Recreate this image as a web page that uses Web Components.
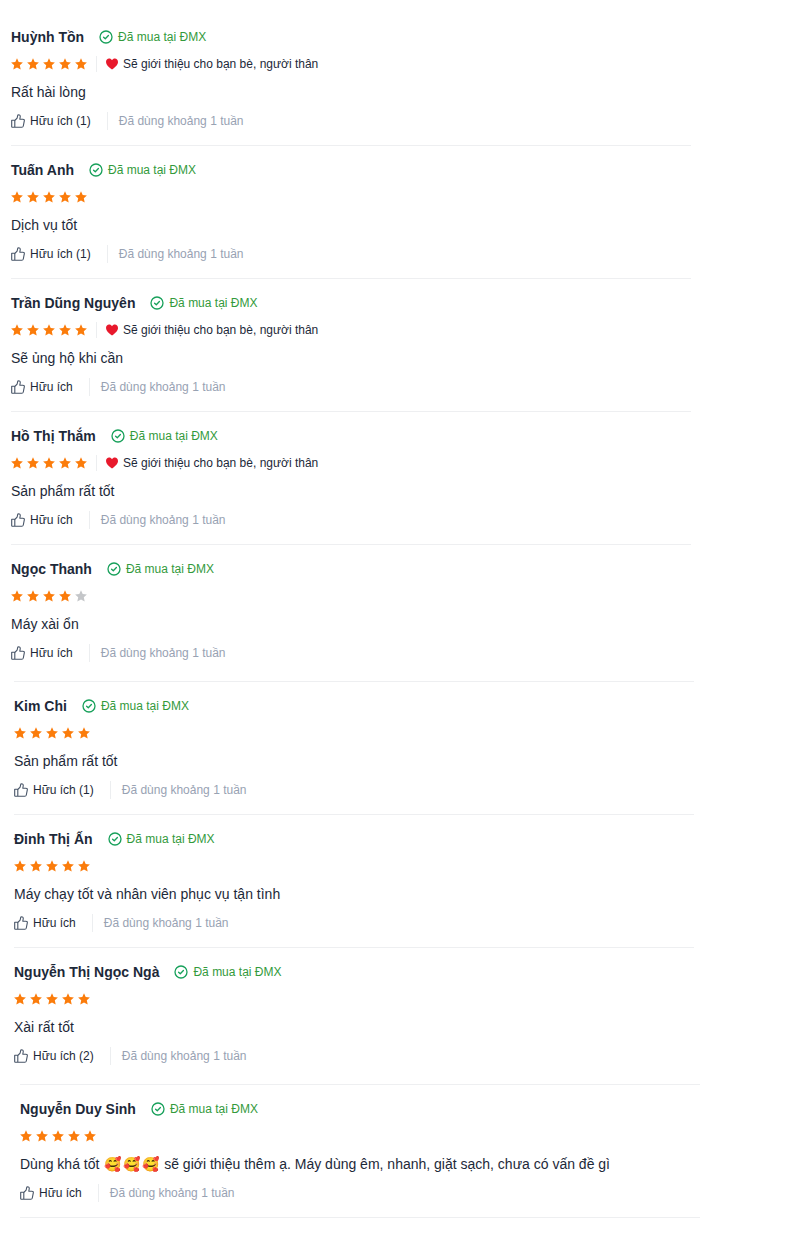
<!DOCTYPE html>
<html lang="vi">
<head>
<meta charset="utf-8">
<meta name="viewport" content="width=device-width, initial-scale=1">
<title>Đánh giá sản phẩm</title>
<style>
body { margin: 0; background: #fff; color: #1d2939; font: 14px/20px "Liberation Sans", Arial, sans-serif; }
.emoji { display: inline-block; width: 19px; text-align: center; }
</style>
</head>
<body>
<review-page>
  <review-group style="--inset: 11px">
    <review-item rating="5" recommend likes="1"><span slot="name">Huỳnh Tồn</span>Rất hài lòng</review-item>
    <review-item rating="5" likes="1"><span slot="name">Tuấn Anh</span>Dịch vụ tốt</review-item>
    <review-item rating="5" recommend><span slot="name">Trần Dũng Nguyên</span>Sẽ ủng hộ khi cần</review-item>
    <review-item rating="5" recommend><span slot="name">Hồ Thị Thắm</span>Sản phẩm rất tốt</review-item>
    <review-item rating="4"><span slot="name">Ngọc Thanh</span>Máy xài ổn</review-item>
  </review-group>
  <review-group ruled style="--inset: 14px">
    <review-item rating="5" likes="1"><span slot="name">Kim Chi</span>Sản phẩm rất tốt</review-item>
    <review-item rating="5"><span slot="name">Đinh Thị Ấn</span>Máy chạy tốt và nhân viên phục vụ tận tình</review-item>
    <review-item rating="5" likes="2"><span slot="name">Nguyễn Thị Ngọc Ngà</span>Xài rất tốt</review-item>
  </review-group>
  <review-group ruled closed style="--inset: 20px">
    <review-item rating="5"><span slot="name">Nguyễn Duy Sinh</span>Dùng khá tốt <span class="emoji">🥰</span><span class="emoji">🥰</span><span class="emoji">🥰</span> sẽ giới thiệu thêm ạ. Máy dùng êm, nhanh, giặt sạch, chưa có vấn đề gì</review-item>
  </review-group>
</review-page>

<template id="page-tpl">
  <style>
    :host { display: block; padding: 13px 0 32px; }
    main { display: flex; flex-direction: column; gap: 4px; }
  </style>
  <main><slot></slot></main>
</template>

<template id="group-tpl">
  <style>
    :host { display: block; width: 85%; margin-left: var(--inset); }
    :host([ruled]) { border-top: 1px solid #eeeff1; }
    :host([closed]) { border-bottom: 1px solid #eeeff1; }
    ::slotted(review-item:not(:last-child)) { border-bottom: 1px solid #eeeff1; }
  </style>
  <slot></slot>
</template>

<template id="stars-tpl">
  <style>
    :host { display: flex; gap: 4px; }
    svg { width: 12px; height: 12px; fill: #fb7c0b; }
    svg.off { fill: #c4c6c9; }
  </style>
</template>

<template id="item-tpl">
  <style>
    :host { display: block; padding: 14px 0 15px; }
    .row { display: flex; align-items: center; }
    .head { height: 20px; }
    h3 { margin: 0 15px 0 0; font-size: 14px; line-height: 20px; font-weight: 700; }
    .bought { display: flex; align-items: center; gap: 5px; font-size: 12px; color: #339a3c; }
    .bought svg { width: 14px; height: 14px; }
    .rate { height: 16px; margin-top: 9px; font-size: 12px; line-height: 16px; }
    .recommend { display: flex; align-items: center; gap: 5px; height: 16px; margin-left: 9px; padding-left: 9px; border-left: 1px solid #eceef0; }
    .recommend svg { width: 12px; height: 12px; }
    p { margin: 10px 0; }
    .foot { height: 18px; font-size: 12px; line-height: 18px; }
    button { display: flex; align-items: center; gap: 5px; margin: 0; padding: 0; border: 0; background: none; font: inherit; color: inherit; cursor: pointer; }
    button svg { width: 14px; height: 14px; }
    .used { margin-left: 16px; padding-left: 11px; border-left: 1px solid #eceef0; color: #98a2b3; }
  </style>
  <article>
    <div class="row head">
      <h3><slot name="name"></slot></h3>
      <span class="bought"><svg viewBox="0 0 14 14" fill="none" stroke="#17a05a" stroke-width="1.3" stroke-linecap="round" stroke-linejoin="round" aria-hidden="true"><circle cx="7" cy="7" r="6"/><path d="M4.6 7.2l1.7 1.6 3.1-3.3"/></svg><span>Đã mua tại ĐMX</span></span>
    </div>
    <div class="row rate"><star-rating></star-rating></div>
    <p><slot></slot></p>
    <div class="row foot">
      <button type="button"><svg viewBox="0 0 14 14" fill="none" stroke="#475467" stroke-width="1.1" stroke-linejoin="round" aria-hidden="true"><path d="M.7 6.3h3.1v7H1.3a.6.6 0 0 1-.6-.6zM3.8 6.5L6.1 4.2 6.8 1c1.6-.6 2.7.5 2.4 2L8.8 5.2h3.1c1.100 0 1.600.7 1.400 1.600l-1 5.200c-.2.9-.7 1.300-1.500 1.300h-7"/></svg><span class="helpful">Hữu ích</span></button>
      <span class="used">Đã dùng khoảng 1 tuần</span>
    </div>
  </article>
</template>

<template id="recommend-tpl">
  <span class="recommend"><svg viewBox="0 0 12 12" aria-hidden="true"><path fill="#e8192c" d="M6 11.6C2.7 9 0 6.9 0 4 0 2 1.4.6 3.1.6 4.4.6 5.4 1.2 6 2.2 6.6 1.2 7.6.6 8.9.6 10.6.6 12 2 12 4c0 2.900-2.700 5-6 7.600z"/></svg><span>Sẽ giới thiệu cho bạn bè, người thân</span></span>
</template>

<script>
const stamp = (host, id) => {
  const root = host.attachShadow({ mode: "open" });
  root.append(document.getElementById(id).content.cloneNode(true));
  return root;
};

class ReviewPage extends HTMLElement {
  constructor() { super(); stamp(this, "page-tpl"); }
}

class ReviewGroup extends HTMLElement {
  constructor() { super(); stamp(this, "group-tpl"); }
}

class StarRating extends HTMLElement {
  static observedAttributes = ["value"];
  constructor() {
    super();
    const root = stamp(this, "stars-tpl");
    const box = document.createElement("template");
    box.innerHTML = `<svg viewBox="0 0 12 12" aria-hidden="true"><path d="M6 .2l1.700 3.700 4.200.5-3.100 2.800.9 4.400L6 9.500l-3.700 2.100.9-4.400L.1 4.400l4.200-.5z"/></svg>`.repeat(5);
    root.append(box.content);
  }
  attributeChangedCallback(name, old, value) {
    this.shadowRoot.querySelectorAll("svg").forEach((star, i) => star.classList.toggle("off", i >= Number(value)));
    this.setAttribute("role", "img");
    this.setAttribute("aria-label", `${value}/5`);
  }
}

class ReviewItem extends HTMLElement {
  constructor() {
    super();
    const root = stamp(this, "item-tpl");
    root.querySelector("star-rating").setAttribute("value", this.getAttribute("rating"));
    if (this.hasAttribute("recommend")) {
      root.querySelector(".rate").append(document.getElementById("recommend-tpl").content.cloneNode(true));
    }
    const likes = this.getAttribute("likes");
    if (likes) root.querySelector(".helpful").textContent = `Hữu ích (${likes})`;
  }
}

customElements.define("review-page", ReviewPage);
customElements.define("review-group", ReviewGroup);
customElements.define("star-rating", StarRating);
customElements.define("review-item", ReviewItem);
</script>
</body>
</html>
